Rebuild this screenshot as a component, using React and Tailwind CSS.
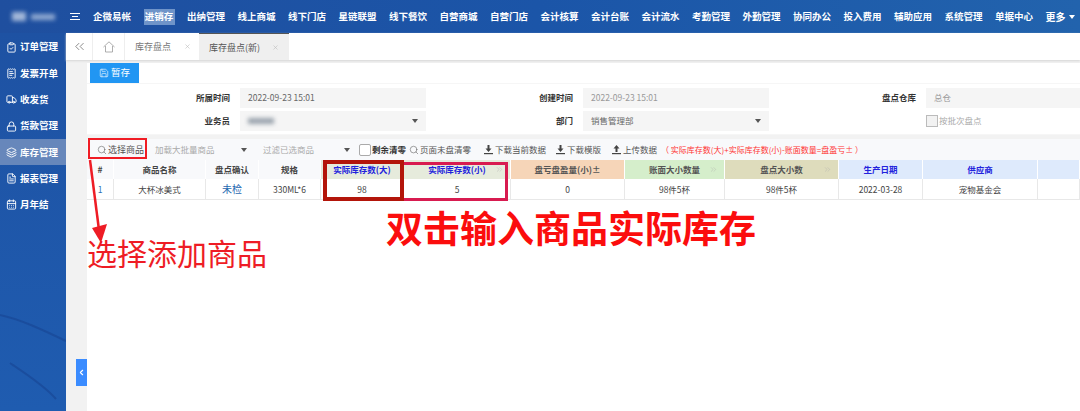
import { ChevronLeft, ChevronsLeft, ChevronsRight, FileText, Layers, Lock, Save, Search, Truck, X, CalendarDays, ClipboardCheck, ReceiptText } from 'lucide-react'

const NAV = ['企微易帐', '进销存', '出纳管理', '线上商城', '线下门店', '星链联盟', '线下餐饮', '自营商城', '自营门店', '会计核算', '会计台账', '会计流水', '考勤管理', '外勤管理', '协同办公', '投入费用', '辅助应用', '系统管理', '单据中心']

const SIDE = [
  { label: '订单管理', Icon: ClipboardCheck },
  { label: '发票开单', Icon: ReceiptText },
  { label: '收发货', Icon: Truck },
  { label: '货款管理', Icon: Lock },
  { label: '库存管理', Icon: Layers, active: true },
  { label: '报表管理', Icon: FileText },
  { label: '月年结', Icon: CalendarDays },
]

const COLS = [
  { title: '#', cell: '1', w: 'w-[27px]', cellCls: 'text-[#2f6fb5]' },
  { title: '商品名称', cell: '大杯冰美式', w: 'w-[92px]' },
  { title: '盘点确认', cell: '未检', w: 'w-[53px]', cellCls: 'text-[#1f68b0] text-[10px]' },
  { title: '规格', cell: '330ML*6', w: 'w-[62px]' },
  { title: '实际库存数(大)', cell: '98', w: 'w-[83px]', head: 'bg-[#e6ebdc] text-[#2222dd]' },
  { title: '实际库存数(小)', cell: '5', w: 'w-[107px]', head: 'bg-[#e6ebdc] text-[#2222dd]', more: true },
  { title: '盘亏盘盈量(小)±', cell: '0', w: 'w-[114px]', head: 'bg-[#f6d5b8]' },
  { title: '账面大小数量', cell: '98件5杯', w: 'w-[100px]', head: 'bg-[#d5eecb]', more: true },
  { title: '盘点大小数', cell: '98件5杯', w: 'w-[114px]', head: 'bg-[#dedcbc]', more: true },
  { title: '生产日期', cell: '2022-03-28', w: 'w-[84px]', head: 'bg-[#deeafc] text-[#2222dd]' },
  { title: '供应商', cell: '宠物基金会', w: 'w-[115px]', head: 'bg-[#deeafc] text-[#2222dd]' },
  { title: '', cell: '', w: 'flex-1', head: 'bg-[#deeafc]' },
]

function Field({ label, value, muted, arrow }) {
  return (
    <>
      <div className="pr-[10px] text-right font-bold text-[#333]">{label}</div>
      <div className={`flex h-[20px] items-center justify-between bg-[#f5f5f5] px-[8px] ${muted ? 'text-[#999]' : 'text-[#666]'}`}>
        <span>{value}</span>
        {arrow && <Caret />}
      </div>
    </>
  )
}

function Caret() {
  return <span className="h-0 w-0 border-x-[3px] border-t-[4px] border-x-transparent border-t-[#555]" />
}

function ToolSelect({ label, w }) {
  return (
    <div className={`flex h-[20px] items-center justify-between pl-[6px] pr-[6px] text-[#aaa] ${w}`}>
      <span>{label}</span>
      <Caret />
    </div>
  )
}

// tray with an arrow, the download and upload marks in the toolbar
function TrayIcon({ up }) {
  return (
    <svg className="h-[11px] w-[11px]" viewBox="0 0 11 11">
      <path d={up ? 'M5.5 1 L8.5 4.5 H6.5 V8 H4.5 V4.5 H2.5 Z' : 'M4.5 1 H6.5 V4.5 H8.5 L5.5 8 L2.5 4.5 H4.5 Z'} fill="#444" />
      <rect x="1" y="9" width="9" height="1.2" fill="#444" />
    </svg>
  )
}

function ToolAction({ icon, label, w }) {
  return (
    <div className={`flex items-center gap-[1px] text-[#555] ${w}`}>
      {icon}
      <span>{label}</span>
    </div>
  )
}

export default function App() {
  return (
    <div className="relative flex h-screen w-full flex-col overflow-hidden bg-[#f2f2f2] text-[8.5px] leading-none" style={{ fontFamily: '"Noto Sans CJK SC", "Liberation Sans", sans-serif' }}>
      {/* Top bar */}
      <header className="flex h-[33px] shrink-0 items-center bg-gradient-to-r from-[#1f4f9f] via-[#1b55a8] to-[#2263ad] pl-[12px] text-white">
        <div className="flex h-[12px] w-[44px] items-center gap-[5px]">
          <span className="h-[9px] w-[14px] bg-[#dbe4f1]/70 blur-[2px]" />
          <span className="h-[6px] w-[24px] bg-[#dbe4f1]/60 blur-[2px]" />
        </div>
        <div className="ml-[14px] flex w-[10px] flex-col gap-[2px]">
          <span className="h-[1px] bg-white" />
          <span className="mx-[2px] h-[1px] bg-white" />
          <span className="h-[1px] bg-white" />
        </div>
        <nav className="ml-[13px] flex items-center gap-[12.5px] text-[9.5px] font-bold">
          {NAV.map((n) => (
            <span key={n} className={n === '进销存' ? 'flex h-[16px] w-[31px] items-center justify-center bg-[#6f94c9]' : 'w-[38px] whitespace-nowrap'}>{n}</span>
          ))}
          <span className="flex items-center gap-[3px] whitespace-nowrap text-[10px]">更多<span className="h-0 w-0 border-x-[3.5px] border-t-[4px] border-x-transparent border-t-white" /></span>
        </nav>
      </header>

      <div className="flex min-h-0 flex-1">
        {/* Left menu */}
        <aside className="relative w-[66px] shrink-0 bg-gradient-to-b from-[#1e52a3] to-[#1f5cb0] pt-[1px] text-white">
          {SIDE.map(({ label, Icon, active }) => (
            <div key={label} className={`flex h-[26.3px] items-center gap-[3px] pl-[6px] text-[9.5px] font-bold whitespace-nowrap ${active ? 'bg-[#6787bb]' : ''}`}>
              <Icon size={11} strokeWidth={2} />
              <span>{label}</span>
            </div>
          ))}
          {/* texture streaks in the menu background */}
          <svg className="absolute bottom-0 left-0 h-[120px] w-[66px]" viewBox="0 0 66 120" fill="none" stroke="#174493" strokeOpacity="0.6">
            <path d="M0 24 C20 28 45 40 66 50" strokeWidth="2" />
            <path d="M10 72 C25 82 45 95 56 108" strokeWidth="2" />
          </svg>
        </aside>

        <main className="relative flex min-w-0 flex-1 flex-col">
          {/* Tabs */}
          <div className="flex h-[27px] shrink-0 items-stretch bg-white text-[9px] text-[#777] shadow-[0_1px_2px_#d5d5d5]">
            <div className="flex w-[27px] items-center justify-center border-r border-[#eee] text-[#666]"><ChevronsLeft size={15} strokeWidth={1.2} /></div>
            <div className="flex w-[32px] items-center justify-center border-r border-[#eee]">
              <svg className="h-[12px] w-[12px]" viewBox="0 0 12 12" fill="none" stroke="#999" strokeWidth="0.8">
                <path d="M0.5 6 L6 0.8 L11.5 6 M2.5 5 V11 H9.5 V5" />
              </svg>
            </div>
            <div className="flex w-[74px] items-center pl-[10px]">
              <span>库存盘点</span>
              <X className="ml-[13px] text-[#bbb]" size={7} />
            </div>
            <div className="flex w-[90px] items-center border-t border-[#555] bg-[#efefef] pl-[10px] text-[#555]">
              <span>库存盘点(新)</span>
              <X className="ml-[12px] text-[#bbb]" size={7} />
            </div>
          </div>

          <div className="ml-[21px] mt-[3px] flex min-h-0 flex-1 flex-col bg-white">
            <div className="h-[20px] shrink-0 pl-[3px]">
              <div className="flex h-[20px] w-[49px] items-center justify-center gap-[2px] bg-[#2196f3] text-[9.5px] text-white">
                <Save size={10} strokeWidth={1.5} />暂存
              </div>
            </div>

            {/* Form */}
            <div className="grid h-[52px] shrink-0 grid-cols-[153px_186px_157px_186px_157px_1fr] content-center items-center gap-y-[3px] border-y border-[#f6f6f6]">
              <Field label="所属时间" value="2022-09-23 15:01" />
              <Field label="创建时间" value="2022-09-23 15:01" muted />
              <Field label="盘点仓库" value="总仓" muted />
              <Field label="业务员" value={<span className="block h-[6px] w-[26px] bg-[#9aa3ad] blur-[2px]" />} arrow />
              <Field label="部门" value="销售管理部" arrow />
              <div className="col-start-6 flex items-center gap-[1px] text-[#aaa]">
                <span className="h-[12px] w-[12px] border border-[#bbb] bg-[#f2f2f2]" />按批次盘点
              </div>
            </div>

            <div className="h-[4px] shrink-0 bg-[#f2f2f2]" />

            {/* Toolbar */}
            <div className="flex h-[21px] shrink-0 items-center bg-[#f8f9fb]">
              <div className="flex w-[62px] items-center gap-[1px] pl-[10px] text-[9px] text-[#555]">
                <Search size={10} strokeWidth={1.3} />
                <span className="whitespace-nowrap">选择商品</span>
              </div>
              <ToolSelect label="加载大批量商品" w="w-[104px]" />
              <div className="w-[4px]" />
              <ToolSelect label="过滤已选商品" w="w-[99px]" />
              <span className="ml-[3px] h-[12px] w-[12px] rounded-[2px] border border-[#aaa] bg-white" />
              <span className="ml-[1px] w-[37px] font-bold text-[#333]">剩余清零</span>
              <ToolAction icon={<Search size={10} strokeWidth={1.3} />} label="页面未盘清零" w="w-[74px]" />
              <ToolAction icon={<TrayIcon />} label="下载当前数据" w="w-[72px]" />
              <ToolAction icon={<TrayIcon />} label="下载模版" w="w-[56px]" />
              <ToolAction icon={<TrayIcon up />} label="上传数据" w="w-[50px]" />
              <span className="whitespace-nowrap text-[8px] text-[#f33]">（ 实际库存数(大)+实际库存数(小)-账面数量=盘盈亏± ）</span>
            </div>

            {/* Table */}
            <div className="relative flex shrink-0">
              {COLS.map((c, i) => (
                <div key={i} className={`shrink-0 ${c.w}`}>
                  <div className={`relative flex h-[19px] items-center justify-center border-r border-white font-bold ${c.head || 'bg-[#f8f9fb] text-[#444]'} ${c.head && !c.head.includes('text-') ? 'text-[#555]' : ''}`}>
                    {c.title}
                    {c.more && <ChevronsRight className="absolute right-[6px] text-[#aaa]" size={9} strokeWidth={1} />}
                  </div>
                  <div className={`flex h-[21px] items-center justify-center border-b border-r border-[#e8e8e8] ${c.cellCls || 'text-[#444]'}`}>{c.cell}</div>
                </div>
              ))}
              {/* Annotation boxes on the stock columns */}
              <div className="absolute left-[236px] top-0 h-[41px] w-[81px] border-[4px] border-[#b3150a]" />
              <div className="absolute left-[317px] top-[2px] h-[39px] w-[104px] border-[3px] border-l-0 border-[#d81b50]" />
            </div>

            {/* Annotation text */}
            <div className="relative flex-1">
              <div className="ml-[299px] mt-[7px] text-[37px] leading-[40px] font-bold whitespace-nowrap text-[#fb0d0d]">双击输入商品实际库存</div>
              <div className="mt-[-12px] text-[30px] leading-[34px] whitespace-nowrap text-[#ee1c25]">选择添加商品</div>
            </div>

            {/* Red frame and arrow for the select-goods button */}
            <div className="absolute left-[22px] top-[105px] h-[21px] w-[59px] border-[2px] border-[#f01c24]" />
            <svg className="absolute left-[21px] top-[125px] h-[90px] w-[30px]" viewBox="0 0 30 90">
              <path d="M3 2 L12 72" stroke="#ee1c25" strokeWidth="2.5" fill="none" />
              <path d="M5 70 L20 66 L14 85 Z" fill="#ee1c25" />
            </svg>
          </div>

          {/* Collapse handle */}
          <div className="absolute left-[10px] top-[326px] flex h-[27px] w-[11px] items-center justify-center bg-[#3b8cff] text-white">
            <ChevronLeft size={9} strokeWidth={3} />
          </div>
        </main>
      </div>
    </div>
  )
}
